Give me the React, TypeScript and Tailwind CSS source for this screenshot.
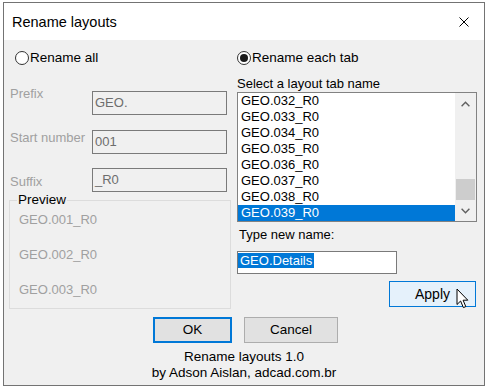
import React from "react";

const layoutTabs: string[] = [
  "GEO.032_R0",
  "GEO.033_R0",
  "GEO.034_R0",
  "GEO.035_R0",
  "GEO.036_R0",
  "GEO.037_R0",
  "GEO.038_R0",
  "GEO.039_R0",
];

const previewNames: string[] = ["GEO.001_R0", "GEO.002_R0", "GEO.003_R0"];

type RadioProps = {
  label: string,
  checked?: boolean,
}

function Radio({ label, checked }: RadioProps) {
  return (
    <div className="flex h-[16px] items-center gap-[1px]">
      <span className="flex h-[14px] w-[14px] items-center justify-center rounded-full border border-[#333333] bg-white">
        {checked ? <span className="h-[8px] w-[8px] rounded-full bg-[#1a1a1a]"></span> : ''}
      </span>
      <span className="text-[13.5px] leading-[16px] text-black">{label}</span>
    </div>
  );
}

type FieldProps = {
  label: string,
  value: string,
  labelClass: string,
}

// disabled textbox with its grey label on the left
function Field({ label, value, labelClass }: FieldProps) {
  return (
    <div className="flex items-start">
      <span className={labelClass}>{label}</span>
      <div className="flex h-[24px] w-[135px] items-center border border-[#7a7a7a] bg-[#f0f0f0] pl-[2px] text-[13px] leading-[16px] text-[#6d6d6d]">
        {value}
      </div>
    </div>
  );
}

function Chevron({ down }: { down?: boolean }) {
  return (
    <svg width="9" height="6" viewBox="0 0 9 6">
      <path
        d={down ? "M0.6 0.8 L4.5 4.8 L8.4 0.8" : "M0.6 5.2 L4.5 1.2 L8.4 5.2"}
        fill="none"
        stroke="#606060"
        strokeWidth="1.4"
      />
    </svg>
  );
}

function LeftColumn() {
  return (
    <div className="flex w-[222px] flex-col">
      <div className="ml-[6px]">
        <Radio label="Rename all" />
      </div>
      <div className="mt-[25px]">
        <Field label="Prefix" value="GEO." labelClass="-mt-[5px] w-[83px] pl-[1px] text-[13px] leading-[16px] text-[#a0a0a0]" />
      </div>
      <div className="mt-[15px]">
        <Field label="Start number" value="001" labelClass="mt-0 w-[83px] pl-[1px] text-[13px] leading-[16px] text-[#a0a0a0]" />
      </div>
      <div className="mt-[14px]">
        <Field label="Suffix" value="_R0" labelClass="mt-[6px] w-[83px] pl-[1px] text-[13px] leading-[16px] text-[#a0a0a0]" />
      </div>
      <fieldset className="h-[117px] w-[222px] border border-[#dcdcdc] pl-[7px]">
        <legend className="px-[1px] text-[13.5px] leading-[16px] text-black">Preview</legend>
        <div className="mt-[4px] flex flex-col gap-[19px] pl-[2px]">
          {previewNames.map((name) => (
            <span key={name} className="text-[13px] leading-[16px] text-[#a0a0a0]">{name}</span>
          ))}
        </div>
      </fieldset>
    </div>
  );
}

function RightColumn() {
  return (
    <div className="flex w-[240px] flex-col">
      <Radio label="Rename each tab" checked />
      <span className="mt-[10px] text-[13px] leading-[16px] text-black">Select a layout tab name</span>
      <div className="flex h-[130px] w-[240px] border border-[#828282] bg-white">
        <div className="flex flex-1 flex-col">
          {layoutTabs.map((tab, index) => (
            index === layoutTabs.length - 1 ?
              <div key={tab} className="h-[16px] bg-[#0078d7] pl-[3px] text-[13px] leading-[16px] text-white">{tab}</div> :
              <div key={tab} className="h-[16px] pl-[3px] text-[13px] leading-[16px] text-black">{tab}</div>
          ))}
        </div>
        <div className="flex w-[21px] flex-col bg-[#f0f0f0]">
          <div className="flex h-[21px] items-center justify-center">
            <Chevron />
          </div>
          <div className="flex flex-1 flex-col justify-end">
            <div className="mx-[1px] h-[21px] bg-[#cdcdcd]"></div>
          </div>
          <div className="flex h-[21px] items-center justify-center">
            <Chevron down />
          </div>
        </div>
      </div>
      <span className="mt-[5px] pl-[2px] text-[13px] leading-[16px] text-black">Type new name:</span>
      <div className="mt-[8px] flex h-[23px] w-[160px] items-start border border-[#7a7a7a] bg-white pt-[1px]">
        <span className="bg-[#0078d7] px-[2px] text-[13px] leading-[15px] text-white">GEO.Details</span>
      </div>
      <button className="mt-[7px] mr-[1px] flex h-[26px] w-[87px] items-center justify-center self-end border border-[#0078d7] bg-[#e5f1fb] text-[14px] leading-[16px] text-black">
        Apply
      </button>
    </div>
  );
}

export default function App() {
  return (
    <div className="relative h-[391px] w-[489px] overflow-hidden bg-white font-['Liberation_Sans',Arial,sans-serif]">
      <div className="ml-[3px] mt-[2px] flex h-[384px] w-[482px] flex-col border border-[#737373]">
        <div className="flex h-[37px] items-center justify-between bg-white pl-[8px] pr-[15px]">
          <span className="text-[14.5px] leading-[18px] text-black">Rename layouts</span>
          <svg width="10" height="10" viewBox="0 0 10 10">
            <path d="M0.5 0.5 L9.5 9.5 M9.5 0.5 L0.5 9.5" stroke="#000" strokeWidth="1" />
          </svg>
        </div>
        <div className="flex h-[345px] flex-col bg-[#f0f0f0]">
          <div className="flex gap-[6px] pl-[5px] pt-[10px]">
            <LeftColumn />
            <RightColumn />
          </div>
          <div className="mt-[8px] flex gap-[12px] pl-[149px]">
            <button className="flex h-[26px] w-[79px] items-center justify-center border-2 border-[#0078d7] bg-[#e1e1e1] text-[13.5px] leading-[16px] text-black">
              OK
            </button>
            <button className="flex h-[26px] w-[94px] items-center justify-center border border-[#adadad] bg-[#e1e1e1] text-[13.5px] leading-[16px] text-black">
              Cancel
            </button>
          </div>
          <div className="mt-[6px] flex flex-col items-center text-[13.5px] leading-[16px] text-black">
            <span>Rename layouts 1.0</span>
            <span>by Adson Aislan, adcad.com.br</span>
          </div>
        </div>
      </div>
      {/* mouse pointer resting on Apply */}
      <svg className="absolute left-[456px] top-[288px]" width="13" height="21" viewBox="0 0 13 21">
        <path d="M1 1 V16.5 L4.6 13 L7.4 19.6 L9.8 18.6 L7.1 12.2 H11.8 Z" fill="#fff" stroke="#000" strokeWidth="1" strokeLinejoin="miter" />
      </svg>
    </div>
  );
}
